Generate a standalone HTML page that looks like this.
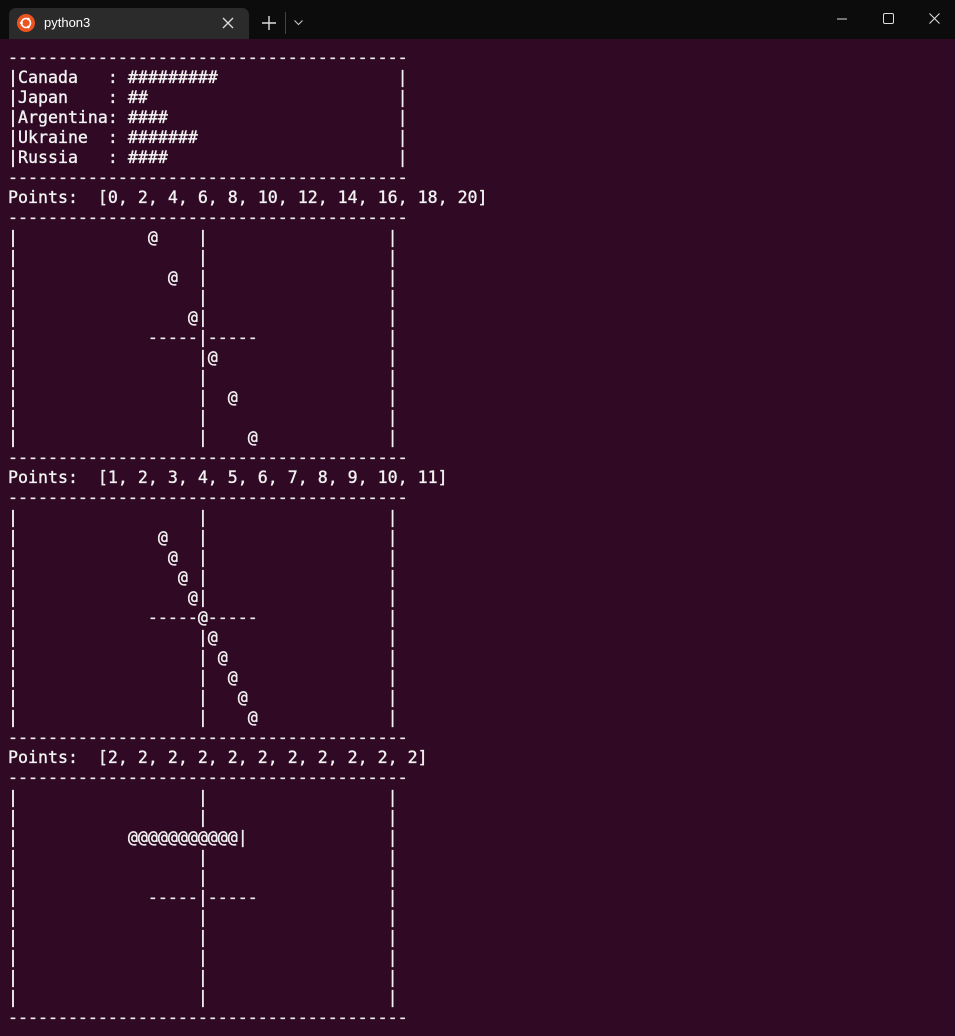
<!DOCTYPE html>
<html><head><meta charset="utf-8"><style>
html,body{margin:0;padding:0;width:955px;height:1036px;overflow:hidden;background:#300a24;}
.top{position:absolute;left:0;top:0;width:955px;height:39px;background:#0c0c0c;}
.tab{position:absolute;left:9px;top:8px;width:240px;height:31px;background:#2b2b2b;border-radius:7px 7px 0 0;}
.title{position:absolute;left:44px;top:15px;color:#fff;font:13px "Liberation Sans",sans-serif;}
pre{position:absolute;left:8px;top:48px;margin:0;font-family:"DejaVu Sans Mono",monospace;font-size:16.6px;line-height:20px;color:#f2f2f2;-webkit-text-stroke:0.35px #f2f2f2;}
</style></head><body>
<div class="top"></div>
<div class="tab"></div>
<svg style="position:absolute;left:17px;top:14px" width="18" height="18" viewBox="0 0 18 18"><circle cx="9" cy="9" r="9" fill="#e95420"/><circle cx="9" cy="9" r="4.5" fill="none" stroke="#fff" stroke-width="1.6"/><circle cx="4.5" cy="9" r="1.4" fill="#fff"/><circle cx="11.3" cy="5" r="1.4" fill="#fff"/><circle cx="11.3" cy="13" r="1.4" fill="#fff"/></svg>
<div class="title">python3</div>
<svg style="position:absolute;left:222px;top:17px" width="12" height="12"><path d="M1 1L11 11M11 1L1 11" stroke="#ddd" stroke-width="1.3"/></svg>
<svg style="position:absolute;left:262px;top:16px" width="14" height="14"><path d="M7 0V14M0 7H14" stroke="#ddd" stroke-width="1.4"/></svg>
<div style="position:absolute;left:285px;top:12px;width:1px;height:22px;background:#444"></div>
<svg style="position:absolute;left:294px;top:20px" width="9" height="6"><path d="M0.5 0.5L4.5 4.5L8.5 0.5" stroke="#ccc" fill="none"/></svg>
<svg style="position:absolute;left:837px;top:18px" width="10" height="2"><path d="M0 1H10" stroke="#ddd"/></svg>
<svg style="position:absolute;left:883px;top:13px" width="11" height="11"><rect x="0.5" y="0.5" width="10" height="10" rx="1.5" fill="none" stroke="#ddd"/></svg>
<svg style="position:absolute;left:929px;top:13px" width="11" height="11"><path d="M0.5 0.5L10.5 10.5M10.5 0.5L0.5 10.5" stroke="#ddd" stroke-width="1.1"/></svg>
<pre>----------------------------------------
|Canada   : #########                  |
|Japan    : ##                         |
|Argentina: ####                       |
|Ukraine  : #######                    |
|Russia   : ####                       |
----------------------------------------
Points:  [0, 2, 4, 6, 8, 10, 12, 14, 16, 18, 20]
----------------------------------------
|             @    |                  |
|                  |                  |
|               @  |                  |
|                  |                  |
|                 @|                  |
|             -----|-----             |
|                  |@                 |
|                  |                  |
|                  |  @               |
|                  |                  |
|                  |    @             |
----------------------------------------
Points:  [1, 2, 3, 4, 5, 6, 7, 8, 9, 10, 11]
----------------------------------------
|                  |                  |
|              @   |                  |
|               @  |                  |
|                @ |                  |
|                 @|                  |
|             -----@-----             |
|                  |@                 |
|                  | @                |
|                  |  @               |
|                  |   @              |
|                  |    @             |
----------------------------------------
Points:  [2, 2, 2, 2, 2, 2, 2, 2, 2, 2, 2]
----------------------------------------
|                  |                  |
|                  |                  |
|           @@@@@@@@@@@|              |
|                  |                  |
|                  |                  |
|             -----|-----             |
|                  |                  |
|                  |                  |
|                  |                  |
|                  |                  |
|                  |                  |
----------------------------------------</pre>
</body></html>
